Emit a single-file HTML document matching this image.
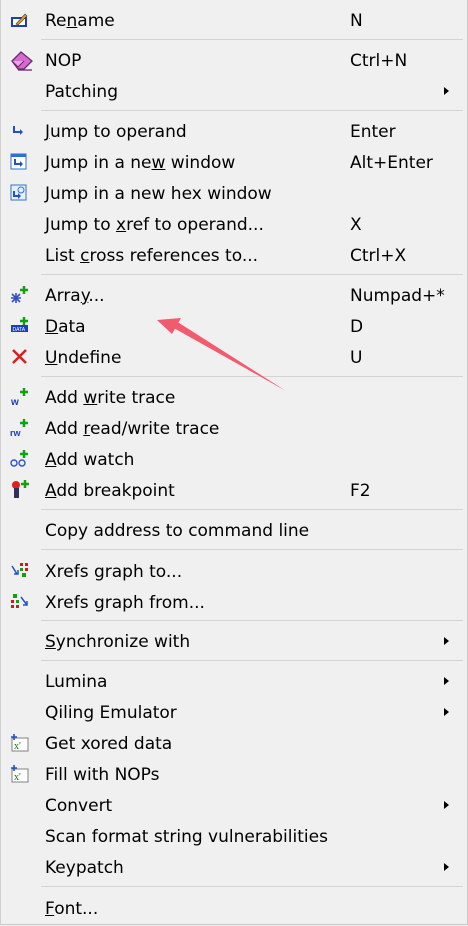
<!DOCTYPE html>
<html><head><meta charset="utf-8"><style>
html,body{margin:0;padding:0}
body{width:468px;height:926px;background:#f0f0f0;position:relative;overflow:hidden;font-family:"DejaVu Sans",sans-serif;font-size:17px;color:#000}
.frame{position:absolute;left:0;top:0;width:466px;height:924px;border:1px solid #c8c8c8;border-top:none;border-left:1px solid #d0d0d0}
.t{position:absolute;left:45px;line-height:20px;white-space:nowrap;margin-top:1px}
.k{position:absolute;left:350px;line-height:20px;white-space:nowrap;margin-top:1px}
.sep{position:absolute;left:41px;width:422px;height:1px;background:#d4d4d4}
.ar{position:absolute;left:444px;width:0;height:0;border-top:4px solid transparent;border-bottom:4px solid transparent;border-left:5px solid #000}
.i{position:absolute;left:10px}
u{text-decoration:underline}
</style></head><body>
<div class="frame"></div>

<svg class="i" style="top:11px" width="20" height="18"><rect x="1" y="6" width="16" height="10" fill="#1c3fb8"/><rect x="3" y="8" width="12" height="6" fill="#fff"/><path d="M6 13 L15 3 L17 5 L8 14 Z" fill="#f0a020" stroke="#333" stroke-width=".6"/></svg>
<svg class="i" style="top:50px" width="24" height="22" viewBox="0 0 24 22"><path d="M2 11 L11 2 L22 11 L14 19 L8 19 Z" fill="#d66ad0" stroke="#6a2a6a" stroke-width="1.3"/><path d="M2 11 L8 17 L14 11" fill="#eea0ea" stroke="#6a2a6a" stroke-width="1"/><path d="M8 20 H22" stroke="#6a2a6a" stroke-width="1.3"/></svg>
<svg class="i" style="top:124px" width="16" height="14"><path d="M4 2 V8 H11" stroke="#2050d0" stroke-width="2" fill="none"/><path d="M10 5 L13 8 L10 11 Z" fill="#2050d0"/></svg>
<svg class="i" style="top:153px" width="18" height="18"><rect x="1" y="1" width="15" height="15" fill="#fff" stroke="#3070d0"/><rect x="1" y="1" width="15" height="3" fill="#3070d0"/><path d="M5 6 V11 H11" stroke="#2050d0" stroke-width="2" fill="none"/><path d="M10 8 L13 11 L10 14 Z" fill="#2050d0"/></svg>
<svg class="i" style="top:184px" width="18" height="18"><rect x="1" y="1" width="15" height="15" fill="#e8f0ff" stroke="#3070d0"/><circle cx="11" cy="6" r="3" fill="none" stroke="#3070d0"/><path d="M4 7 V12 H9" stroke="#2050d0" stroke-width="2" fill="none"/><path d="M8 9 L11 12 L8 15 Z" fill="#2050d0"/></svg>
<svg class="i" style="top:285px" width="20" height="18"><path d="M6 8 V18 M1 13 H11 M2 9 L10 17 M10 9 L2 17" stroke="#3050d0" stroke-width="1.6"/><path d="M14 1 V9 M10 5 H18" stroke="#10a010" stroke-width="2.5"/></svg>
<svg class="i" style="top:316px" width="20" height="18"><path d="M14 1 V9 M10 5 H18" stroke="#10a010" stroke-width="2.5"/><rect x="1" y="9" width="17" height="7" fill="#1c3fb8"/><text x="2.5" y="15" font-size="5" fill="#fff" font-family="Liberation Sans">DATA</text></svg>
<svg class="i" style="top:347px" width="20" height="20"><path d="M3 3 L16 16 M16 3 L3 16" stroke="#d82020" stroke-width="2.6"/></svg>
<svg class="i" style="top:387px" width="20" height="20"><path d="M14 1 V9 M10 5 H18" stroke="#10a010" stroke-width="2.5"/><text x="1" y="18" font-size="10" fill="#1c3fb8" font-family="Liberation Sans" font-weight="bold">w</text></svg>
<svg class="i" style="top:418px" width="20" height="20"><path d="M14 1 V9 M10 5 H18" stroke="#10a010" stroke-width="2.5"/><text x="0" y="18" font-size="9" fill="#1c3fb8" font-family="Liberation Sans" font-weight="bold">rw</text></svg>
<svg class="i" style="top:449px" width="20" height="20"><path d="M14 1 V9 M10 5 H18" stroke="#10a010" stroke-width="2.5"/><circle cx="4" cy="14" r="3" fill="none" stroke="#3050d0" stroke-width="1.4"/><circle cx="12" cy="14" r="3" fill="none" stroke="#3050d0" stroke-width="1.4"/></svg>
<svg class="i" style="top:479px" width="20" height="22"><path d="M15 1 V9 M11 5 H19" stroke="#10a010" stroke-width="2.5"/><circle cx="6" cy="6" r="4" fill="#e02020"/><rect x="4" y="9" width="5" height="10" fill="#303060"/></svg>
<svg class="i" style="top:562px" width="20" height="18"><path d="M2 4 L7 12" stroke="#2050d0" stroke-width="1.5"/><path d="M4 12 H8 V8" fill="none" stroke="#2050d0" stroke-width="1.5"/><rect x="10" y="1" width="3" height="3" fill="#c02020"/><rect x="15" y="1" width="3" height="3" fill="#c02020"/><rect x="10" y="6" width="3" height="3" fill="#10a010"/><rect x="15" y="6" width="3" height="3" fill="#c02020"/><rect x="12" y="11" width="4" height="4" fill="#10a010"/></svg>
<svg class="i" style="top:593px" width="20" height="18"><rect x="3" y="1" width="4" height="4" fill="#10a010"/><rect x="1" y="7" width="3" height="3" fill="#c02020"/><rect x="6" y="7" width="3" height="3" fill="#10a010"/><rect x="1" y="12" width="3" height="3" fill="#c02020"/><rect x="6" y="12" width="3" height="3" fill="#c02020"/><path d="M11 4 L17 12" stroke="#2050d0" stroke-width="1.5"/><path d="M13 12 H17 V8" fill="none" stroke="#2050d0" stroke-width="1.5"/></svg>
<svg class="i" style="top:733px" width="20" height="20"><rect x="2" y="5" width="16" height="13" fill="#fff" stroke="#808080"/><text x="4" y="16" font-size="10" fill="#107010" font-family="Liberation Serif">x'</text><path d="M4 1 V7 M1 4 H7" stroke="#2050d0" stroke-width="1.6"/></svg>
<svg class="i" style="top:764px" width="20" height="20"><rect x="2" y="5" width="16" height="13" fill="#fff" stroke="#808080"/><text x="4" y="16" font-size="10" fill="#107010" font-family="Liberation Serif">x'</text><path d="M4 1 V7 M1 4 H7" stroke="#2050d0" stroke-width="1.6"/></svg>

<div class="t" style="top:10px">Re<u>n</u>ame</div><div class="k" style="top:10px">N</div>
<div class="sep" style="top:39px"></div>
<div class="t" style="top:50px">NOP</div><div class="k" style="top:50px">Ctrl+N</div>
<div class="t" style="top:81px">Patching</div><div class="ar" style="top:87px"></div>
<div class="sep" style="top:110px"></div>
<div class="t" style="top:121px"><u>J</u>ump to operand</div><div class="k" style="top:121px">Enter</div>
<div class="t" style="top:152px">Jump in a ne<u>w</u> window</div><div class="k" style="top:152px">Alt+Enter</div>
<div class="t" style="top:183px">Jump in a new hex window</div>
<div class="t" style="top:214px">Jump to <u>x</u>ref to operand...</div><div class="k" style="top:214px">X</div>
<div class="t" style="top:245px">List <u>c</u>ross references to...</div><div class="k" style="top:245px">Ctrl+X</div>
<div class="sep" style="top:274px"></div>
<div class="t" style="top:285px">Arra<u>y</u>...</div><div class="k" style="top:285px">Numpad+*</div>
<div class="t" style="top:316px"><u>D</u>ata</div><div class="k" style="top:316px">D</div>
<div class="t" style="top:347px"><u>U</u>ndefine</div><div class="k" style="top:347px">U</div>
<div class="sep" style="top:376px"></div>
<div class="t" style="top:387px">Add <u>w</u>rite trace</div>
<div class="t" style="top:418px">Add <u>r</u>ead/write trace</div>
<div class="t" style="top:449px"><u>A</u>dd watch</div>
<div class="t" style="top:480px"><u>A</u>dd breakpoint</div><div class="k" style="top:480px">F2</div>
<div class="sep" style="top:509px"></div>
<div class="t" style="top:520px">Copy address to command line</div>
<div class="sep" style="top:549px"></div>
<div class="t" style="top:561px">Xrefs graph to...</div>
<div class="t" style="top:592px">Xrefs graph from...</div>
<div class="sep" style="top:620px"></div>
<div class="t" style="top:631px"><u>S</u>ynchronize with</div><div class="ar" style="top:637px"></div>
<div class="sep" style="top:660px"></div>
<div class="t" style="top:671px">Lumina</div><div class="ar" style="top:677px"></div>
<div class="t" style="top:702px">Qiling Emulator</div><div class="ar" style="top:708px"></div>
<div class="t" style="top:733px">Get xored data</div>
<div class="t" style="top:764px">Fill with NOPs</div>
<div class="t" style="top:795px">Convert</div><div class="ar" style="top:801px"></div>
<div class="t" style="top:826px">Scan format string vulnerabilities</div>
<div class="t" style="top:857px">Keypatch</div><div class="ar" style="top:863px"></div>
<div class="sep" style="top:886px"></div>
<div class="t" style="top:898px"><u>F</u>ont...</div>

<svg style="position:absolute;left:0;top:0" width="468" height="926"><path d="M286 391 L172 327 L176 321 Z" fill="#f25a6e"/><path d="M157 320 L181 318 L172 334 Z" fill="#f25a6e"/></svg>
</body></html>
